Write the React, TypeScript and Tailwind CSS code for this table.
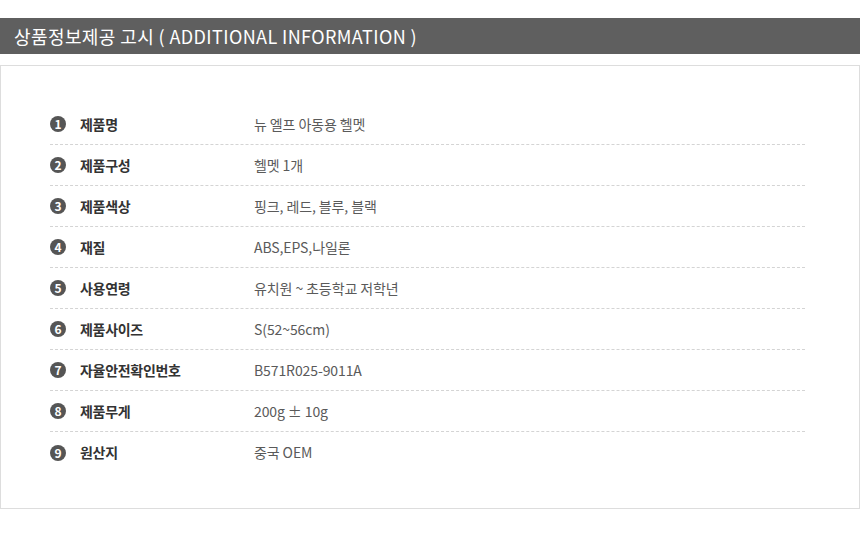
import React from 'react';

interface InfoRow {
  label: string;
  value: string;
}

const rows: InfoRow[] = [
  { label: '제품명', value: '뉴 엘프 아동용 헬멧' },
  { label: '제품구성', value: '헬멧 1개' },
  { label: '제품색상', value: '핑크, 레드, 블루, 블랙' },
  { label: '재질', value: 'ABS,EPS,나일론' },
  { label: '사용연령', value: '유치원 ~ 초등학교 저학년' },
  { label: '제품사이즈', value: 'S(52~56cm)' },
  { label: '자율안전확인번호', value: 'B571R025-9011A' },
  { label: '제품무게', value: '200g ± 10g' },
  { label: '원산지', value: '중국 OEM' },
];

const App: React.FC = () => {
  return (
    <div
      className="w-[860px] h-[540px] bg-white pt-[18px]"
      style={{ fontFamily: '"Noto Sans CJK KR", "Noto Sans", sans-serif' }}
    >
      {/* title bar */}
      <div className="h-[36px] bg-[#5f5f5f] flex items-center pl-[14px]">
        <h2 className="text-white text-[18px] leading-none tracking-[0.4px]">
          상품정보제공 고시 ( ADDITIONAL INFORMATION )
        </h2>
      </div>

      <div className="mt-[11px] h-[444px] border border-[#dddddd] pt-[38px] pl-[49px] pr-[54px]">
        {rows.map((row, i) => (
          <div
            key={i}
            className={`h-[41px] flex items-center ${
              i < rows.length - 1 ? 'border-b border-dashed border-[#d4d4d4]' : ''
            }`}
          >
            <div className="w-[204px] flex items-center">
              <span className="w-[16px] h-[16px] rounded-full bg-[#555555] text-white text-[12px] font-bold flex items-center justify-center leading-none">
                {i + 1}
              </span>
              <span className="ml-[14px] text-[14px] font-bold text-[#333333] tracking-[-0.3px]">
                {row.label}
              </span>
            </div>
            <span className="text-[14px] text-[#5a5a5a] tracking-[-0.1px]">{row.value}</span>
          </div>
        ))}
      </div>
    </div>
  );
};

export default App;
